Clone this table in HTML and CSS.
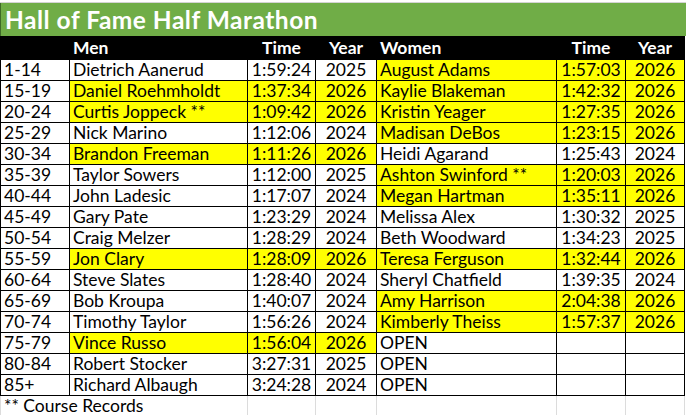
FILE: index.html
```html
<!DOCTYPE html>
<html lang="en">
<head>
<meta charset="utf-8">
<title>Hall of Fame Half Marathon</title>
<link rel="stylesheet" href="styles.css">
</head>
<body>
<div class="sheet">
  <div class="topstrip"></div>
  <div class="title">Hall of Fame Half Marathon</div>
  <div class="grid">
    <div class="c hd"></div><div class="c hd">Men</div><div class="c hd ctr">Time</div><div class="c hd ctr">Year</div><div class="c hd">Women</div><div class="c hd ctr">Time</div><div class="c hd ctr">Year</div>

    <div class="c">1-14</div><div class="c">Dietrich Aanerud</div><div class="c ctr">1:59:24</div><div class="c ctr">2025</div><div class="c y">August Adams</div><div class="c ctr y">1:57:03</div><div class="c ctr y">2026</div>

    <div class="c">15-19</div><div class="c y">Daniel Roehmholdt</div><div class="c ctr y">1:37:34</div><div class="c ctr y">2026</div><div class="c y">Kaylie Blakeman</div><div class="c ctr y">1:42:32</div><div class="c ctr y">2026</div>

    <div class="c">20-24</div><div class="c y">Curtis Joppeck **</div><div class="c ctr y">1:09:42</div><div class="c ctr y">2026</div><div class="c y">Kristin Yeager</div><div class="c ctr y">1:27:35</div><div class="c ctr y">2026</div>

    <div class="c">25-29</div><div class="c">Nick Marino</div><div class="c ctr">1:12:06</div><div class="c ctr">2024</div><div class="c y">Madisan DeBos</div><div class="c ctr y">1:23:15</div><div class="c ctr y">2026</div>

    <div class="c">30-34</div><div class="c y">Brandon Freeman</div><div class="c ctr y">1:11:26</div><div class="c ctr y">2026</div><div class="c">Heidi Agarand</div><div class="c ctr">1:25:43</div><div class="c ctr">2024</div>

    <div class="c">35-39</div><div class="c">Taylor Sowers</div><div class="c ctr">1:12:00</div><div class="c ctr">2025</div><div class="c y">Ashton Swinford **</div><div class="c ctr y">1:20:03</div><div class="c ctr y">2026</div>

    <div class="c">40-44</div><div class="c">John Ladesic</div><div class="c ctr">1:17:07</div><div class="c ctr">2024</div><div class="c y">Megan Hartman</div><div class="c ctr y">1:35:11</div><div class="c ctr y">2026</div>

    <div class="c">45-49</div><div class="c">Gary Pate</div><div class="c ctr">1:23:29</div><div class="c ctr">2024</div><div class="c">Melissa Alex</div><div class="c ctr">1:30:32</div><div class="c ctr">2025</div>

    <div class="c">50-54</div><div class="c">Craig Melzer</div><div class="c ctr">1:28:29</div><div class="c ctr">2024</div><div class="c">Beth Woodward</div><div class="c ctr">1:34:23</div><div class="c ctr">2025</div>

    <div class="c">55-59</div><div class="c y">Jon Clary</div><div class="c ctr y">1:28:09</div><div class="c ctr y">2026</div><div class="c y">Teresa Ferguson</div><div class="c ctr y">1:32:44</div><div class="c ctr y">2026</div>

    <div class="c">60-64</div><div class="c">Steve Slates</div><div class="c ctr">1:28:40</div><div class="c ctr">2024</div><div class="c">Sheryl Chatfield</div><div class="c ctr">1:39:35</div><div class="c ctr">2024</div>

    <div class="c">65-69</div><div class="c">Bob Kroupa</div><div class="c ctr">1:40:07</div><div class="c ctr">2024</div><div class="c y">Amy Harrison</div><div class="c ctr y">2:04:38</div><div class="c ctr y">2026</div>

    <div class="c">70-74</div><div class="c">Timothy Taylor</div><div class="c ctr">1:56:26</div><div class="c ctr">2024</div><div class="c y">Kimberly Theiss</div><div class="c ctr y">1:57:37</div><div class="c ctr y">2026</div>

    <div class="c">75-79</div><div class="c y">Vince Russo</div><div class="c ctr y">1:56:04</div><div class="c ctr y">2026</div><div class="c">OPEN</div><div class="c ctr"></div><div class="c ctr"></div>

    <div class="c">80-84</div><div class="c">Robert Stocker</div><div class="c ctr">3:27:31</div><div class="c ctr">2025</div><div class="c">OPEN</div><div class="c ctr"></div><div class="c ctr"></div>

    <div class="c">85+</div><div class="c">Richard Albaugh</div><div class="c ctr">3:24:28</div><div class="c ctr">2024</div><div class="c">OPEN</div><div class="c ctr"></div><div class="c ctr"></div>
  </div>
  <div class="foot">
    <div class="f wide">** Course Records</div><div class="f"></div><div class="f"></div><div class="f"></div><div class="f"></div><div class="f"></div><div class="f"></div>
  </div>
</div>
</body>
</html>
```

FILE: styles.css
```css
html, body {
  margin: 0;
  padding: 0;
  background: #ffffff;
}

.sheet {
  width: 686px;
  font-family: Lato, "Open Sans", "Liberation Sans", sans-serif;
  font-size: 17.5px;
  color: #000000;
}

.topstrip {
  height: 2px;
  border-bottom: 1px solid #d4d4d4;
  background: #ffffff;
}

.title {
  height: 33px;
  background: #70ad47;
  border-left: 1px solid #3e6b27;
  box-sizing: border-box;
  color: #ffffff;
  font-weight: 700;
  font-size: 24.5px;
  letter-spacing: 0.5px;
  line-height: 33px;
  padding-left: 4px;
  white-space: nowrap;
}

.grid {
  display: grid;
  grid-template-columns: 68px 177px 67px 60px 179px 68px 58px;
  grid-template-rows: 23px;
  grid-auto-rows: 20px;
  gap: 1px;
  padding: 0 1px 1px 1px;
  background: #000000;
  width: max-content;
}

.c {
  background: #ffffff;
  line-height: 20px;
  padding-left: 3px;
  white-space: nowrap;
  overflow: visible;
}

.c.y {
  background: #ffff00;
}

.c.ctr {
  text-align: center;
  padding-left: 0;
}

.c.hd {
  background: #000000;
  color: #ffffff;
  font-weight: 700;
  line-height: 23px;
}

.foot {
  display: grid;
  grid-template-columns: 246px 67px 60px 179px 68px 58px;
  grid-template-rows: 20px;
  column-gap: 1px;
  padding: 0 1px 0 1px;
  background: #dcdcdc;
  width: max-content;
}

.f {
  background: #ffffff;
  line-height: 20px;
}

.f.wide {
  padding-left: 3px;
  white-space: nowrap;
}
```
